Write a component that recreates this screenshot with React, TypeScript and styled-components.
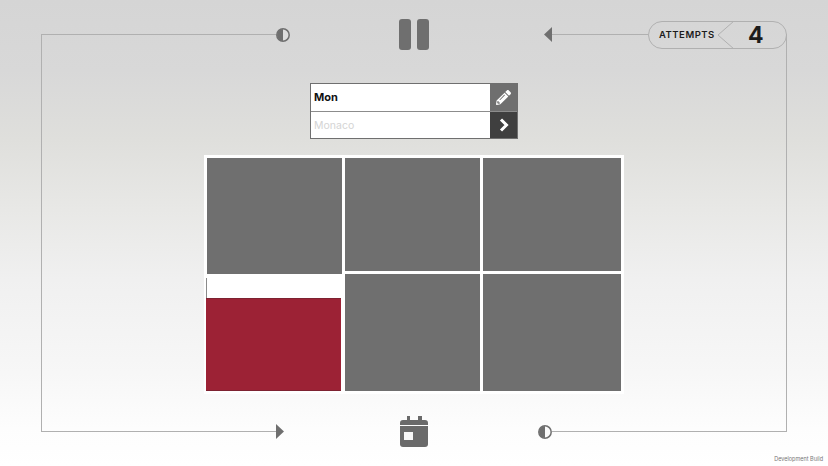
import styled, { createGlobalStyle } from 'styled-components';
import { FaPencilAlt } from 'react-icons/fa';

const GlobalStyle = createGlobalStyle`
    html, body, #root {
        margin: 0;
        width: 100%;
        height: 100%;
    }
    body {
        overflow: hidden;
        font-family: "Inter", "Liberation Sans", sans-serif;
    }
`;

const Screen = styled.div`
    width: 828px;
    height: 466px;
    display: flex;
    flex-direction: column;
    background: linear-gradient(180deg, #d5d5d5 0%, #d8d8d8 15%, #dfdfdc 30%, #e8e8e6 45%, #f0f0f0 60%, #f7f7f7 80%, #fdfdfd 92%, #ffffff 100%);
`;

const Frame = styled.div`
    width: 746px;
    height: 398px;
    box-sizing: border-box;
    margin: 34px 0 0 41px;
    display: flex;
    flex-direction: column;
    border-left: 1px solid #b0b0b0;
    border-right: 1px solid #b0b0b0;
`;

const Rail = styled.div`
    margin: 0 -1px;
    display: grid;
    grid-template-columns: 1fr 32px 1fr;
    grid-template-rows: 1px;
    align-items: center;
    justify-items: center;
`;

const RailSide = styled.div<{ $end?: boolean }>`
    justify-self: stretch;
    display: flex;
    align-items: center;
    justify-content: ${(p) => (p.$end ? 'flex-end' : 'flex-start')};
`;

const RailLine = styled.div<{ $width: number }>`
    width: ${(p) => p.$width}px;
    height: 1px;
    background: #b0b0b0;
`;

const PauseIcon = styled.div`
    width: 30px;
    height: 31px;
    display: flex;
    justify-content: space-between;
`;

const PauseBar = styled.div`
    width: 12px;
    background: #6f6f6f;
    border-radius: 3px;
`;

const Attempts = styled.div`
    position: relative;
    width: 139px;
    height: 28px;
    box-sizing: border-box;
    display: flex;
    align-items: center;
    border: 1px solid #b0b0b0;
    border-radius: 14px;
`;

const AttemptsLabel = styled.span`
    margin-left: 10px;
    width: 89px;
    font-size: 9.5px;
    font-weight: 600;
    letter-spacing: 0.5px;
    color: #1c1c1c;
`;

const AttemptsValue = styled.span`
    font-size: 23px;
    font-weight: 700;
    color: #1c1c1c;
`;

const AttemptsNotch = styled.svg`
    position: absolute;
    left: 68px;
    top: -1px;
`;

const Content = styled.div`
    flex: 1;
    display: flex;
    flex-direction: column;
    align-items: center;
    padding-top: 48px;
`;

const GuessBox = styled.div`
    width: 208px;
    height: 56px;
    box-sizing: border-box;
    border: 1px solid #6f6f6f;
    background: #ffffff;
    display: grid;
    grid-template-rows: 1fr 1fr;
`;

const GuessRow = styled.div<{ $first?: boolean }>`
    display: flex;
    align-items: stretch;
    border-top: ${(p) => (p.$first ? 'none' : '1px solid #8c8c8c')};
`;

const GuessText = styled.div<{ $hint?: boolean }>`
    flex: 1;
    display: flex;
    align-items: center;
    padding: 0 0 ${(p) => (p.$hint ? '0' : '2px')} 3px;
    font-size: ${(p) => (p.$hint ? '10.5px' : '11px')};
    font-weight: ${(p) => (p.$hint ? 400 : 700)};
    color: ${(p) => (p.$hint ? '#d4d4d4' : '#111111')};
`;

const GuessButton = styled.div<{ $dark?: boolean }>`
    width: 27px;
    display: flex;
    align-items: center;
    justify-content: center;
    color: #ffffff;
    background: ${(p) => (p.$dark ? '#3f3f3f' : '#6f6f6f')};
`;

const Board = styled.div`
    margin-top: 16px;
    width: 420px;
    height: 239px;
    box-sizing: border-box;
    padding: 3px;
    background: #ffffff;
    display: grid;
    grid-template-columns: 135px 135px 138px;
    grid-template-rows: 113px 117px;
    gap: 3px;
`;

const Tile = styled.div<{ $tall?: boolean }>`
    background: #6f6f6f;
    margin-bottom: ${(p) => (p.$tall ? '-3px' : '0')};
`;

const RevealTile = styled.div`
    margin: 4px 1px 0 -1px;
    display: flex;
    flex-direction: column;
    justify-content: flex-end;
    border-left: 1px solid #8a8a8a;
`;

const RevealFill = styled.div`
    height: 93px;
    margin-left: -1px;
    box-sizing: border-box;
    background: #9c2235;
    border-top: 1px solid #7d2231;
    border-bottom: 1px solid #7d2231;
`;

const Footer = styled.div`
    margin-top: auto;
    padding: 0 5px 3px 0;
    text-align: right;
    font-size: 5.5px;
    line-height: 7px;
    color: #777777;
`;

const HalfCircle = ({ fill }: { fill: string }) => (
    <svg width="14" height="14" viewBox="0 0 14 14">
        <circle cx="7" cy="7" r="6.2" fill={fill} stroke="#6f6f6f" strokeWidth="1.5" />
        <path d="M7 1a6 6 0 0 0 0 12z" fill="#6f6f6f" />
    </svg>
);

const ArrowLeft = () => (
    <svg width="8" height="15" viewBox="0 0 8 15">
        <path d="M8 0v15L0 7.5z" fill="#6f6f6f" />
    </svg>
);

const ArrowRight = () => (
    <svg width="8" height="15" viewBox="0 0 8 15">
        <path d="M0 0v15l8-7.5z" fill="#6f6f6f" />
    </svg>
);

const NextIcon = () => (
    <svg width="10" height="14" viewBox="0 0 10 14">
        <path d="M2 1.5L7.5 7L2 12.5" fill="none" stroke="#ffffff" strokeWidth="3" />
    </svg>
);

const CalendarIcon = () => (
    <svg width="28" height="31" viewBox="0 0 28 31">
        <path d="M7 0h3v4h8V0h4v4h3a3 3 0 0 1 3 3v2H0V7a3 3 0 0 1 3-3h4z" fill="#6a6a6a" />
        <path d="M0 10h28v18a3 3 0 0 1-3 3H3a3 3 0 0 1-3-3z" fill="#6a6a6a" />
        <rect x="4" y="16" width="9" height="8" fill="#f6f6f6" />
    </svg>
);

const App = () => {
    return (
        <Screen>
            <GlobalStyle />
            <Frame>
                <Rail>
                    <RailSide>
                        <RailLine $width={235} />
                        <HalfCircle fill="#dddddd" />
                    </RailSide>
                    <PauseIcon>
                        <PauseBar />
                        <PauseBar />
                    </PauseIcon>
                    <RailSide $end>
                        <ArrowLeft />
                        <RailLine $width={96} />
                        <Attempts>
                            <AttemptsLabel>ATTEMPTS</AttemptsLabel>
                            <AttemptsValue>4</AttemptsValue>
                            <AttemptsNotch width="18" height="28" viewBox="0 0 18 28">
                                <path d="M17 0L1 14l16 14" fill="none" stroke="#b0b0b0" />
                            </AttemptsNotch>
                        </Attempts>
                    </RailSide>
                </Rail>
                <Content>
                    <GuessBox>
                        <GuessRow $first>
                            <GuessText>Mon</GuessText>
                            <GuessButton>
                                <FaPencilAlt size={15} />
                            </GuessButton>
                        </GuessRow>
                        <GuessRow>
                            <GuessText $hint>Monaco</GuessText>
                            <GuessButton $dark>
                                <NextIcon />
                            </GuessButton>
                        </GuessRow>
                    </GuessBox>
                    <Board>
                        <Tile $tall />
                        <Tile />
                        <Tile />
                        <RevealTile>
                            <RevealFill />
                        </RevealTile>
                        <Tile />
                        <Tile />
                    </Board>
                </Content>
                <Rail>
                    <RailSide>
                        <RailLine $width={235} />
                        <ArrowRight />
                    </RailSide>
                    <CalendarIcon />
                    <RailSide $end>
                        <HalfCircle fill="#fbfbfb" />
                        <RailLine $width={235} />
                    </RailSide>
                </Rail>
            </Frame>
            <Footer>Development Build</Footer>
        </Screen>
    );
};

export default App;
